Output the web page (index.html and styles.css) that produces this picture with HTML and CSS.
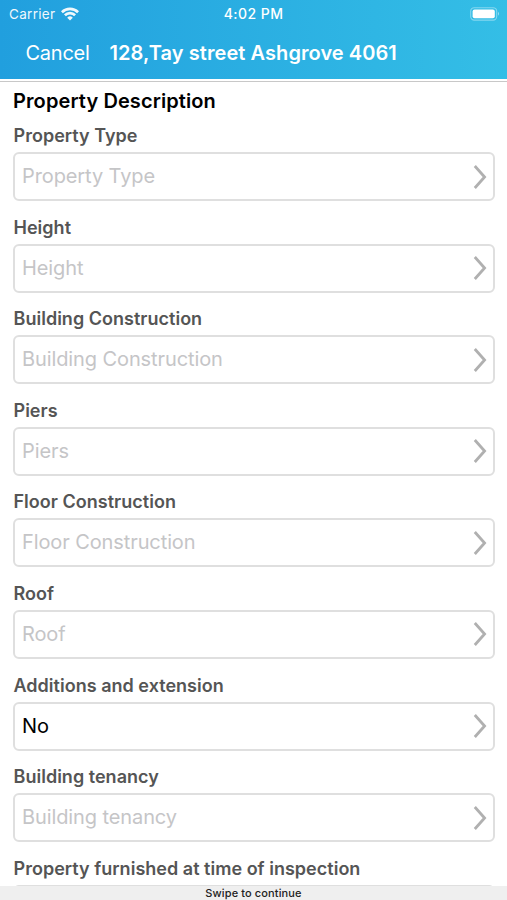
FILE: index.html
```html
<!DOCTYPE html>
<html lang="en">
<head>
<meta charset="utf-8">
<title>Property Description</title>
<link rel="stylesheet" href="styles.css">
</head>
<body>
<svg class="symbols" width="0" height="0" aria-hidden="true">
  <symbol id="chevron" viewBox="0 0 14 26"><path d="M1.8 2 11.6 13 1.8 24" fill="none" stroke="currentColor" stroke-width="2.8"/></symbol>
</svg>
<div class="screen">
  <header class="header">
    <div class="status">
      <div class="carrier"><span>Carrier</span>
        <svg class="wifi" viewBox="0 0 18 14" fill="none" stroke="#fff" stroke-width="2.7"><path d="M.9 5.2a11.4 11.4 0 0 1 16.2 0"/><path d="M3.9 8.3a7.2 7.2 0 0 1 10.2 0"/><path d="M9 13.5 6.2 10.7a4 4 0 0 1 5.6 0z" fill="#fff" stroke="none"/></svg>
      </div>
      <span class="time">4:02 PM</span>
      <svg class="battery" viewBox="0 0 30 14"><rect x=".7" y=".7" width="26" height="12.4" rx="3.6" fill="none" stroke="#fff" stroke-opacity=".4" stroke-width="1.1"/><rect x="2.6" y="2.6" width="22.2" height="8.6" rx="2" fill="#fff"/><path d="M28 4.8q2 2 0 4z" fill="#fff" fill-opacity=".5"/></svg>
    </div>
    <nav class="nav"><span class="cancel">Cancel</span><span class="address">128,Tay street Ashgrove 4061</span></nav>
  </header>
  <main class="form">
    <h1 class="title">Property Description</h1>
    <section class="field"><div class="label">Property Type</div><div class="select"><span>Property Type</span><svg class="chevron"><use href="#chevron"/></svg></div></section>
    <section class="field"><div class="label">Height</div><div class="select"><span>Height</span><svg class="chevron"><use href="#chevron"/></svg></div></section>
    <section class="field"><div class="label">Building Construction</div><div class="select"><span>Building Construction</span><svg class="chevron"><use href="#chevron"/></svg></div></section>
    <section class="field"><div class="label">Piers</div><div class="select"><span>Piers</span><svg class="chevron"><use href="#chevron"/></svg></div></section>
    <section class="field"><div class="label">Floor Construction</div><div class="select"><span>Floor Construction</span><svg class="chevron"><use href="#chevron"/></svg></div></section>
    <section class="field"><div class="label">Roof</div><div class="select"><span>Roof</span><svg class="chevron"><use href="#chevron"/></svg></div></section>
    <section class="field"><div class="label">Additions and extension</div><div class="select filled"><span>No</span><svg class="chevron"><use href="#chevron"/></svg></div></section>
    <section class="field"><div class="label">Building tenancy</div><div class="select"><span>Building tenancy</span><svg class="chevron"><use href="#chevron"/></svg></div></section>
    <section class="field"><div class="label">Property furnished at time of inspection</div><div class="select"></div></section>
  </main>
  <footer class="footer">Swipe to continue</footer>
</div>
</body>
</html>
```

FILE: styles.css
```css
* { box-sizing: border-box; }
body { margin: 0; background: #fff; font-family: Inter, "Liberation Sans", sans-serif; }
.symbols { display: block; }
.screen { display: flex; flex-direction: column; width: 507px; height: 900px; overflow: hidden; }
.header { flex: none; height: 79px; color: #fff; background: linear-gradient(90deg, #219fde, #34bee6); }
.status { display: grid; grid-template-columns: 1fr auto 1fr; align-items: center; height: 27px; padding: 0 7px 0 9px; font-size: 13.5px; }
.carrier { display: flex; align-items: center; gap: 6px; letter-spacing: .3px; opacity: .93; }
.wifi { width: 18px; height: 14px; }
.time { margin-right: 2px; font-size: 14px; font-weight: 500; letter-spacing: .45px; }
.battery { justify-self: end; width: 30px; height: 14px; }
.nav { display: flex; align-items: center; height: 51px; padding-left: 25.5px; font-size: 20px; white-space: nowrap; }
.cancel { width: 84px; letter-spacing: -.25px; }
.address { font-weight: 600; letter-spacing: .07px; }
.form { flex: 1; min-height: 0; overflow: hidden; margin-top: 2px; padding: 0 12px 0 13px; border-top: 1px solid #c8c8c8; }
.title { height: 28px; margin: 0; font-size: 20px; font-weight: 600; line-height: 38px; letter-spacing: .1px; color: #000; white-space: nowrap; }
.field { height: 91.6px; }
.label { height: 42px; padding: 14px 0 0 .5px; font-size: 18px; font-weight: 600; line-height: 24px; letter-spacing: .02px; color: #555; white-space: nowrap; }
.select { display: flex; align-items: center; justify-content: space-between; height: 49px; padding: 0 6.5px 0 7px; border: 2px solid #dfdfdf; border-radius: 6px; font-size: 20px; letter-spacing: -.1px; color: #c5c5c7; }
.select span { padding-bottom: 1px; }
.filled { color: #000; }
.chevron { width: 14px; height: 26px; color: #b0b0b0; }
.footer { flex: none; height: 14px; background: #efefef; color: #222; font-size: 11px; font-weight: 500; line-height: 14px; letter-spacing: .12px; text-align: center; }
```
